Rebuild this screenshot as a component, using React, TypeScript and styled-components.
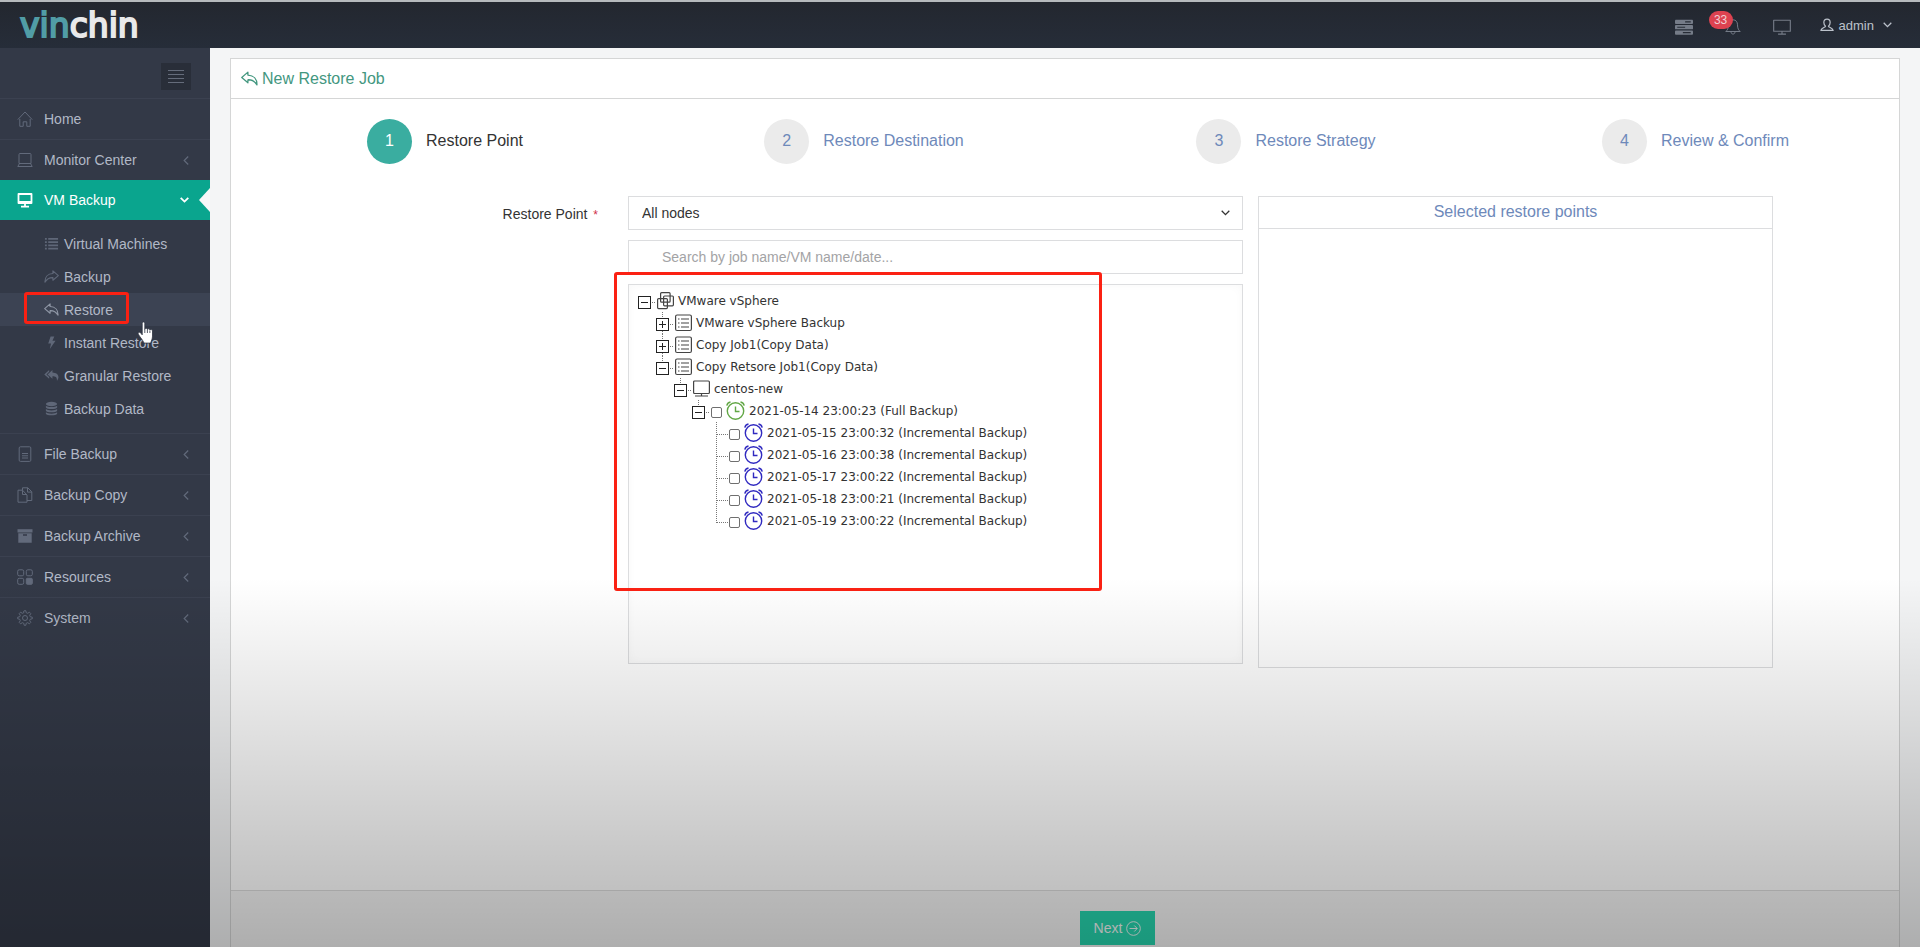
import React, { useState } from "react";
import styled, { createGlobalStyle, css } from "styled-components";

const GlobalStyle = createGlobalStyle`
  * { box-sizing: border-box; }
  body {
    margin: 0;
    font-family: "Liberation Sans", Arial, sans-serif;
    font-size: 14px;
    color: #333;
    background: #f4f5f6;
  }
  button, input, select { font: inherit; color: inherit; }
  a { text-decoration: none; color: inherit; }
  ul, ol { list-style: none; margin: 0; padding: 0; }
`;

/* ---------- page frame ---------- */

const Page = styled.div`
  position: relative;
  display: flex;
  flex-direction: column;
  min-height: 100vh;
  overflow: hidden;
`;

const Scrim = styled.div`
  position: absolute;
  inset: auto 0 0 0;
  height: 39%;
  z-index: 5;
  pointer-events: none;
  background: linear-gradient(rgba(0, 0, 0, 0), rgba(0, 0, 0, 0.29));
`;

const TopBar = styled.header`
  display: flex;
  align-items: center;
  justify-content: space-between;
  height: 48px;
  padding: 0 28px 0 20px;
  border-top: 2px solid #b6babd;
  background: linear-gradient(#23272f, #262d39);
`;

const Logo = styled.a`
  padding-top: 2px;
  font-family: "DejaVu Sans", Verdana, sans-serif;
  font-size: 33px;
  line-height: 36px;
  color: #e9e9ea;
  -webkit-text-stroke: 2px currentColor;
  span { color: #519da6; }
`;

const TopActions = styled.nav`
  display: flex;
  align-items: center;
  gap: 32px;
`;

const TopButton = styled.button`
  position: relative;
  display: flex;
  align-items: center;
  padding: 4px 0 0;
  border: 0;
  background: none;
  color: #757c88;
`;

const Badge = styled.span`
  position: absolute;
  right: 8px;
  top: -4px;
  width: 24px;
  height: 18px;
  border-radius: 9px;
  background: #dd4250;
  color: #f0d0d4;
  font-size: 12px;
  line-height: 18px;
  text-align: center;
`;

const UserButton = styled.button`
  display: flex;
  align-items: center;
  gap: 5px;
  margin-left: -3px;
  padding: 0;
  border: 0;
  background: none;
  color: #bcc2cb;
  font-size: 13px;
  svg:last-child { margin-left: 4px; }
`;

const Body = styled.div`
  display: flex;
  flex: 1;
`;

/* ---------- sidebar ---------- */

const Sidebar = styled.aside`
  flex: 0 0 210px;
  background: #333947;
  color: #b1b8c6;
`;

const ToggleRow = styled.div`
  display: flex;
  justify-content: flex-end;
  height: 50px;
  padding: 15px 19px 0 0;
`;

const ToggleButton = styled.button`
  display: flex;
  align-items: center;
  justify-content: center;
  width: 30px;
  height: 27px;
  padding: 0;
  border: 0;
  background: #292e39;
  color: #656c7b;
`;

const MenuLink = styled.a<{ $active?: boolean }>`
  position: relative;
  display: flex;
  align-items: center;
  height: 41px;
  padding: 0 21px 0 17px;
  border-top: 1px solid #3b4150;
  gap: 11px;
  color: #b1b8c6;
  > svg { color: #626a7b; }
  > span { flex: 1; }
  ${(p) =>
    p.$active &&
    css`
      height: 40px;
      border-top: 0;
      background: #0aa58e;
      color: #fff;
      > svg { color: #fff; }
      &::after {
        content: "";
        position: absolute;
        right: 0;
        top: 8px;
        border: solid transparent;
        border-width: 12px 11px 12px 0;
        border-right-color: #f7f8f9;
      }
    `}
`;

const SubMenu = styled.ul`
  padding: 7px 0 8px;
`;

const SubItem = styled.li`
  position: relative;
`;

const SubLink = styled.a<{ $current?: boolean }>`
  display: flex;
  align-items: center;
  gap: 5px;
  height: 33px;
  padding-left: 44px;
  background: ${(p) => (p.$current ? "#3c4353" : "transparent")};
  > svg { color: ${(p) => (p.$current ? "#8f97a6" : "#5f6778")}; }
`;

const redOutline = css`
  position: absolute;
  border: 3px solid #fb2113;
  border-radius: 3px;
  pointer-events: none;
`;

const MenuMark = styled.div`
  ${redOutline}
  left: 24px;
  top: -1px;
  width: 105px;
  height: 32px;
`;

const Pointer = styled.svg`
  position: absolute;
  left: 137px;
  top: 28px;
  z-index: 2;
`;

/* ---------- wizard ---------- */

const Main = styled.main`
  display: flex;
  flex: 1;
  min-width: 0;
  padding: 10px 20px 0;
`;

const Panel = styled.section`
  display: flex;
  flex: 1;
  flex-direction: column;
  border: 1px solid #d5d6d6;
  border-bottom: 0;
  background: #fff;
`;

const PanelTitle = styled.h1`
  display: flex;
  align-items: center;
  gap: 4px;
  height: 40px;
  margin: 0;
  padding-left: 10px;
  border-bottom: 1px solid #d5d6d6;
  color: #43977f;
  font-size: 16px;
  font-weight: 400;
`;

const Steps = styled.ol`
  display: grid;
  grid-template-columns: 428fr 410fr 434fr 385fr;
  padding: 20px 11px 32px 0;
`;

const StepLink = styled.a<{ $current?: boolean }>`
  display: flex;
  align-items: center;
  justify-content: center;
  gap: 14px;
  font-size: 16px;
  color: ${(p) => (p.$current ? "#333" : "#6e89ba")};
  > span:first-child {
    width: 45px;
    height: 45px;
    border-radius: 50%;
    line-height: 44px;
    text-align: center;
    background: ${(p) => (p.$current ? "#3aada0" : "#ebebeb")};
    color: ${(p) => (p.$current ? "#fff" : "#6e89ba")};
  }
  > span:last-child { padding-bottom: 2px; }
`;

const Form = styled.form`
  display: grid;
  grid-template-columns: 397fr 615fr 530fr;
  flex: 1;
  align-items: start;
  padding-right: 126px;
`;

const FieldLabel = styled.label`
  padding-right: 30px;
  line-height: 36px;
  text-align: right;
  em {
    margin-left: 2px;
    color: #d0304a;
    font-size: 12px;
    font-style: normal;
  }
`;

const Fields = styled.div`
  display: flex;
  flex-direction: column;
  gap: 10px;
`;

const SelectWrap = styled.div`
  position: relative;
  display: flex;
  > svg {
    position: absolute;
    right: 13px;
    top: 14px;
    pointer-events: none;
  }
`;

const Select = styled.select`
  appearance: none;
  width: 100%;
  height: 34px;
  padding: 0 13px;
  border: 1px solid #dcdddf;
  border-radius: 0;
  background: #fff;
`;

const SearchInput = styled.input`
  width: 100%;
  height: 34px;
  padding: 0 33px;
  border: 1px solid #dcdddf;
  border-radius: 0;
  background: #fff;
  &::placeholder { color: #a3a3a5; opacity: 1; }
`;

const TreeBox = styled.div`
  position: relative;
  height: 380px;
  padding: 5px 8px;
  border: 1px solid #dcdddf;
  box-shadow: inset 0 0 10px rgba(0, 0, 0, 0.03);
`;

const TreeMark = styled.div`
  ${redOutline}
  left: -15px;
  top: -13px;
  width: 488px;
  height: 319px;
`;

const Branch = styled.ul`
  ul { padding-left: 18px; }
`;

const NodeRow = styled.div`
  display: flex;
  align-items: center;
  height: 22px;
  font-family: "DejaVu Sans", Verdana, sans-serif;
  font-size: 12px;
  white-space: nowrap;
`;

const NodeSwitch = styled.button`
  display: flex;
  width: 20px;
  height: 22px;
  padding: 0;
  border: 0;
  background: none;
`;

const NodeLabel = styled.label`
  display: flex;
  align-items: center;
  gap: 4px;
`;

const Tick = styled.input`
  appearance: none;
  width: 11px;
  height: 11px;
  margin: 2px 0 0;
  border: 1px solid #6f6f6f;
  border-radius: 2px;
  background: #fff;
  &:checked { background: #3aada0; }
`;

const Selected = styled.section`
  margin-left: 15px;
  height: 472px;
  border: 1px solid #dcdddf;
`;

const SelectedTitle = styled.h2`
  margin: 0;
  height: 32px;
  border-bottom: 1px solid #dcdddf;
  color: #6e89ba;
  font-size: 16px;
  font-weight: 400;
  line-height: 30px;
  text-align: center;
`;

const PanelFooter = styled.footer`
  flex: 0 0 57px;
  padding: 20px 0 0 calc(50% + 15px);
  border-top: 1px solid #dcdcdc;
  background: #f5f5f5;
`;

const NextButton = styled.button`
  display: flex;
  align-items: center;
  justify-content: center;
  gap: 4px;
  width: 75px;
  height: 34px;
  padding: 0;
  border: 0;
  background: #26d5ae;
  color: #f2f7f6;
`;

/* ---------- icons ---------- */

type IconName =
  | "home" | "laptop" | "screen" | "file" | "copy" | "archive" | "grid" | "gear"
  | "list" | "share" | "reply" | "bolt" | "replyAll" | "db"
  | "menu" | "servers" | "bell" | "monitor" | "user" | "next";

const art: Record<IconName, React.ReactNode> = {
  home: <path d="M.8 8.6 8 1l7.200 7.600M2.800 8v7.300h3.400v-4.500h3.600v4.500h3.400V8" />,
  laptop: <path d="M3 1.500h10a1 1 0 0 1 1 1v9H2v-9a1 1 0 0 1 1-1ZM2.500 11.500.8 14.500h14.400l-1.700-3" />,
  screen: (
    <>
      <rect x="1.500" y="2" width="13" height="9" strokeWidth="1.800" />
      <path d="M1 9.800h14M8 11v3M4 14.600h8" strokeWidth="1.800" />
    </>
  ),
  file: (
    <>
      <rect x="2.200" y=".8" width="11.600" height="14.600" rx="1.200" />
      <path d="M5 7.500h6M5 9.800h6M5 12h6" />
    </>
  ),
  copy: (
    <>
      <path d="M5.500 3.200H1v12h9V8L5.500 3.200v4.300H10" />
      <path d="M5.500 3.200V.8h5.300l4 4v8.700H10M10.500.8v4.300h4.300" />
    </>
  ),
  archive: (
    <>
      <path d="M.5 1.200h15v3.300H.5z" fill="currentColor" stroke="none" />
      <path d="M1.300 5.200h13.400v9.600H1.300zM6 6.300v1.400h4V6.300z" fill="currentColor" fillRule="evenodd" stroke="none" />
    </>
  ),
  grid: (
    <>
      <rect x=".7" y=".8" width="6" height="6" rx="1.500" />
      <rect x="9.300" y=".8" width="6" height="6" rx="1.500" />
      <rect x=".7" y="9.300" width="6" height="6" rx="1.500" />
      <rect x="9.300" y="9.300" width="6" height="6" rx="1" fill="currentColor" />
    </>
  ),
  gear: (
    <>
      <circle cx="8" cy="8" r="2.500" />
      <path d="m6.800 1 .4-.3h1.600l.4 2 1.500.6 1.700-1.100 1.400 1.400-1.100 1.700.6 1.500 2 .4v1.600l-2 .4-.6 1.500 1.100 1.700-1.400 1.400-1.700-1.100-1.500.6-.4 2H7.200l-.4-2-1.500-.6-1.700 1.100-1.400-1.400 1.100-1.700-.6-1.500-2-.4V7.200l2-.4.6-1.500-1.100-1.700 1.400-1.400 1.700 1.100 1.500-.6Z" />
    </>
  ),
  list: (
    <path d="M1 3h2M1 6.500h2M1 10h2M1 13.500h2M4.500 3H15M4.500 6.500H15M4.500 10H15M4.500 13.500H15" strokeWidth="2" />
  ),
  share: <path d="m9.500 2 5.800 5-5.800 5V9.200C6 9 3.500 10 1 14 .8 8.800 4 5.100 9.500 4.800Z" strokeWidth="1.200" />,
  reply: <path d="M6.500 2 .7 7l5.800 5V9.200C10 9 12.500 10 15 14c.2-5.200-3-8.900-8.500-9.200Z" strokeWidth="1.200" />,
  bolt: <path d="M7 1.500h4L9 6h3.300L6.200 15l1.300-6H4.500Z" fill="currentColor" stroke="none" />,
  replyAll: (
    <>
      <path d="M5.500 2 .3 6.800l5.200 4.700V9.600L2.600 6.800l2.900-2.700Z" fill="currentColor" stroke="none" />
      <path d="M9 2 3.800 6.800 9 11.500V8.800c3.500 0 5 1 4.800 5C17.500 9 14.500 5 9 4.800Z" fill="currentColor" stroke="none" />
    </>
  ),
  db: (
    <g fill="currentColor" stroke="none">
      <ellipse cx="8" cy="3.200" rx="6" ry="2.400" />
      <path d="M2 5c1.500 2 10.500 2 12 0v1.800c-1 2.200-11 2.200-12 0ZM2 8.500c1.500 2 10.500 2 12 0v1.800c-1 2.200-11 2.200-12 0ZM2 12c1.500 2 10.500 2 12 0v1.500c-1 2.300-11 2.300-12 0Z" />
    </g>
  ),
  menu: <path d="M0 1.500h16M0 5.500h16M0 9.500h16M0 13.500h16" />,
  servers: (
    <>
      <rect x="0" y="1.500" width="16" height="3.800" rx=".8" fill="currentColor" stroke="none" />
      <rect x="0" y="6.300" width="16" height="3.800" rx=".8" fill="currentColor" stroke="none" />
      <rect x="0" y="11.100" width="16" height="3.800" rx=".8" fill="currentColor" stroke="none" />
      <path d="M9 3.400h5M2 8.200h7M7 13h7" stroke="#272c36" />
    </>
  ),
  bell: (
    <path d="M8 .8c-3 0-4.500 2.200-4.500 5 0 4-1.300 5.400-2.700 6.700h14.400c-1.400-1.300-2.700-2.700-2.700-6.700 0-2.800-1.500-5-4.500-5ZM6 12.800c0 3 4 3 4 0" />
  ),
  monitor: <path d="M.6 2h14.800v9.800H.6zM4.500 14.300h7M8 12v2" />,
  user: (
    <path d="M8 1.200c-2.300 0-3.600 1.600-3.600 3.900 0 2 .8 3.300 1.900 4.200-.2 1.800-4.600 1.500-5.300 4.900h14c-.7-3.400-5.100-3.100-5.300-4.900 1.100-.9 1.900-2.200 1.900-4.200 0-2.300-1.300-3.900-3.600-3.900Z" strokeWidth="1.400" />
  ),
  next: (
    <>
      <circle cx="8" cy="8" r="7.300" />
      <path d="M3.800 8h8M8.800 4.800 12 8l-3.200 3.200" />
    </>
  ),
};

const Icon = ({ name, size = 16 }: { name: IconName; size?: number }) => (
  <svg width={size} height={size} viewBox="0 0 16 16" fill="none" stroke="currentColor" strokeLinejoin="round" aria-hidden="true">
    {art[name]}
  </svg>
);

const ChevronDown = ({ heavy }: { heavy?: boolean }) => (
  <svg width="9" height="6" viewBox="0 0 9 6" fill="none" stroke="currentColor" strokeWidth={heavy ? 1.800 : 1.300} aria-hidden="true">
    <path d="M.7.800 4.500 4.600 8.300.800" />
  </svg>
);

const ChevronLeft = () => (
  <svg width="6" height="9" viewBox="0 0 6 9" fill="none" stroke="currentColor" strokeWidth="1.200" aria-hidden="true">
    <path d="M5.200.5 1.200 4.500l4 4" />
  </svg>
);

/* ---------- restore point tree ---------- */

type Kind = "platform" | "job" | "vm" | "full" | "incremental";
type TreeNode = { text: string; kind: Kind; open?: boolean; children?: TreeNode[] };

const points = [
  "2021-05-15 23:00:32",
  "2021-05-16 23:00:38",
  "2021-05-17 23:00:22",
  "2021-05-18 23:00:21",
  "2021-05-19 23:00:22",
];

const tree: TreeNode[] = [
  {
    text: "VMware vSphere", kind: "platform", open: true,
    children: [
      { text: "VMware vSphere Backup", kind: "job", children: [] },
      { text: "Copy Job1(Copy Data)", kind: "job", children: [] },
      {
        text: "Copy Retsore Job1(Copy Data)", kind: "job", open: true,
        children: [
          {
            text: "centos-new", kind: "vm", open: true,
            children: [
              {
                text: "2021-05-14 23:00:23 (Full Backup)", kind: "full", open: true,
                children: points.map((p) => ({ text: `${p} (Incremental Backup)`, kind: "incremental" as Kind })),
              },
            ],
          },
        ],
      },
    ],
  },
];

const Clock = ({ color }: { color: string }) => (
  <svg width="19" height="20" viewBox="0 0 19 20" fill="none" stroke={color} strokeWidth="1.400" aria-hidden="true">
    <circle cx="9.500" cy="10" r="8.200" />
    <path d="M9.500 5.500v5h4M.8 4.600C1.200 2.800 2.800 1.300 4.500 1M18.200 4.600c-.4-1.800-2-3.300-3.700-3.600" />
  </svg>
);

const KindIcon = ({ kind }: { kind: Kind }) => {
  if (kind === "full") return <Clock color="#62a745" />;
  if (kind === "incremental") return <Clock color="#3029c0" />;
  return (
    <svg width="17" height="18" viewBox="0 0 17 18" fill="none" stroke="#444" strokeWidth="1.200" aria-hidden="true">
      {kind === "platform" && (
        <>
          <rect x="3.600" y=".7" width="9.500" height="9.500" rx="1" />
          <rect x="6.600" y="4" width="9.800" height="9.800" rx="1" />
          <rect x=".6" y="6.600" width="9.800" height="10" rx="1" />
        </>
      )}
      {kind === "job" && (
        <>
          <rect x=".6" y="1" width="15.800" height="15.500" rx="1.500" />
          <path d="M3 5h1.500M3 9h1.500M3 13h1.500M6 5h8M6 9h8M6 13h8" />
        </>
      )}
      {kind === "vm" && (
        <>
          <rect x=".6" y="1" width="15.800" height="12.500" rx="1" />
          <path d="M8.500 13.500v2.500M2 16h13" />
        </>
      )}
    </svg>
  );
};

const SwitchArt = ({ open, root, last, leaf }: { open?: boolean; root?: boolean; last?: boolean; leaf?: boolean }) => (
  <svg width="20" height="22" viewBox="0 0 20 22" fill="none" stroke="#222" aria-hidden="true">
    {leaf ? (
      <path d={`M7.500 0V${last ? 13 : 22}M8 12.500h11`} stroke="#777" strokeDasharray="1 1" />
    ) : (
      <>
        {!root && <path d="M7.500 0v6" stroke="#777" strokeDasharray="1 1" />}
        {!root && !last && <path d="M7.500 19v3" stroke="#777" strokeDasharray="1 1" />}
        <path d="M15 12.500h4" stroke="#777" strokeDasharray="1 1" />
        <rect x="1.500" y="6.500" width="12" height="12" />
        <path d="M4 12.500h7" />
        {!open && <path d="M7.500 9v7" />}
      </>
    )}
  </svg>
);

const TreeItem = ({ node, root, last }: { node: TreeNode; root?: boolean; last?: boolean }) => {
  const [open, setOpen] = useState(!!node.open);
  const pickable = node.kind === "full" || node.kind === "incremental";
  return (
    <li>
      <NodeRow>
        {node.children ? (
          <NodeSwitch type="button" aria-expanded={open} aria-label={node.text} onClick={() => setOpen(!open)}>
            <SwitchArt open={open} root={root} last={last} />
          </NodeSwitch>
        ) : (
          <SwitchArt leaf last={last} />
        )}
        <NodeLabel as={pickable ? "label" : "span"}>
          {pickable && <Tick type="checkbox" />}
          <KindIcon kind={node.kind} />
          {node.text}
        </NodeLabel>
      </NodeRow>
      {open && node.children && node.children.length > 0 && (
        <ul>
          {node.children.map((c, i) => (
            <TreeItem key={c.text} node={c} last={i === node.children!.length - 1} />
          ))}
        </ul>
      )}
    </li>
  );
};

/* ---------- menu data ---------- */

const topMenu: { text: string; icon: IconName; plain?: boolean }[] = [
  { text: "Home", icon: "home", plain: true },
  { text: "Monitor Center", icon: "laptop" },
];

const subMenu: { text: string; icon: IconName }[] = [
  { text: "Virtual Machines", icon: "list" },
  { text: "Backup", icon: "share" },
  { text: "Restore", icon: "reply" },
  { text: "Instant Restore", icon: "bolt" },
  { text: "Granular Restore", icon: "replyAll" },
  { text: "Backup Data", icon: "db" },
];

const lowerMenu: { text: string; icon: IconName }[] = [
  { text: "File Backup", icon: "file" },
  { text: "Backup Copy", icon: "copy" },
  { text: "Backup Archive", icon: "archive" },
  { text: "Resources", icon: "grid" },
  { text: "System", icon: "gear" },
];

const steps = ["Restore Point", "Restore Destination", "Restore Strategy", "Review & Confirm"];

export default function App() {
  return (
    <Page>
      <GlobalStyle />
      <TopBar>
        <Logo href="#"><span>vin</span>chin</Logo>
        <TopActions>
          <TopButton aria-label="Tasks"><Icon name="servers" size={18} /></TopButton>
          <TopButton aria-label="Alerts">
            <Icon name="bell" />
            <Badge>33</Badge>
          </TopButton>
          <TopButton aria-label="Screen"><Icon name="monitor" size={18} /></TopButton>
          <UserButton>
            <Icon name="user" size={14} />
            admin
            <ChevronDown />
          </UserButton>
        </TopActions>
      </TopBar>
      <Body>
        <Sidebar>
          <ToggleRow>
            <ToggleButton aria-label="Toggle menu"><Icon name="menu" /></ToggleButton>
          </ToggleRow>
          <nav>
            {topMenu.map((m) => (
              <MenuLink href="#" key={m.text}>
                <Icon name={m.icon} />
                <span>{m.text}</span>
                {!m.plain && <ChevronLeft />}
              </MenuLink>
            ))}
            <MenuLink href="#" $active>
              <Icon name="screen" />
              <span>VM Backup</span>
              <ChevronDown heavy />
            </MenuLink>
            <SubMenu>
              {subMenu.map((m) => (
                <SubItem key={m.text}>
                  <SubLink href="#" $current={m.text === "Restore"}>
                    <Icon name={m.icon} size={15} />
                    {m.text}
                  </SubLink>
                  {m.text === "Restore" && (
                    <>
                      <MenuMark />
                      <Pointer width="19" height="24" viewBox="0 0 19 24" aria-hidden="true">
                        <path
                          d="M5.200 2.200c0-1.600 2.600-1.600 2.600 0v6c.3-1.300 2.600-1.200 2.600.2.500-1 2.500-.8 2.500.6.500-.9 2.600-.6 2.600.9v5.200c0 3-1.200 4.400-1.800 7H7c-.8-2.500-2.600-4.200-4.600-7.200-1.200-1.900-1.700-2.900-.8-3.500 1-.7 2.400.6 3.600 2.400Z"
                          fill="#fff" stroke="#2d3240" strokeWidth=".8"
                        />
                        <path d="M7.800 8v4M10.400 8.500V12M12.900 9.500V12" stroke="#2d3240" strokeWidth=".8" />
                      </Pointer>
                    </>
                  )}
                </SubItem>
              ))}
            </SubMenu>
            {lowerMenu.map((m) => (
              <MenuLink href="#" key={m.text}>
                <Icon name={m.icon} />
                <span>{m.text}</span>
                <ChevronLeft />
              </MenuLink>
            ))}
          </nav>
        </Sidebar>
        <Main>
          <Panel>
            <PanelTitle><Icon name="reply" size={17} />New Restore Job</PanelTitle>
            <Steps>
              {steps.map((s, i) => (
                <li key={s}>
                  <StepLink href="#" $current={i === 0}>
                    <span>{i + 1}</span>
                    <span>{s}</span>
                  </StepLink>
                </li>
              ))}
            </Steps>
            <Form>
              <FieldLabel htmlFor="node">Restore Point <em>*</em></FieldLabel>
              <Fields>
                <SelectWrap>
                  <Select id="node"><option>All nodes</option></Select>
                  <ChevronDown />
                </SelectWrap>
                <SearchInput aria-label="Search" placeholder="Search by job name/VM name/date..." />
                <TreeBox>
                  <Branch>
                    {tree.map((n) => <TreeItem key={n.text} node={n} root last />)}
                  </Branch>
                  <TreeMark />
                </TreeBox>
              </Fields>
              <Selected>
                <SelectedTitle>Selected restore points</SelectedTitle>
              </Selected>
            </Form>
            <PanelFooter>
              <NextButton type="button">Next <Icon name="next" size={15} /></NextButton>
            </PanelFooter>
          </Panel>
        </Main>
      </Body>
      <Scrim />
    </Page>
  );
}
